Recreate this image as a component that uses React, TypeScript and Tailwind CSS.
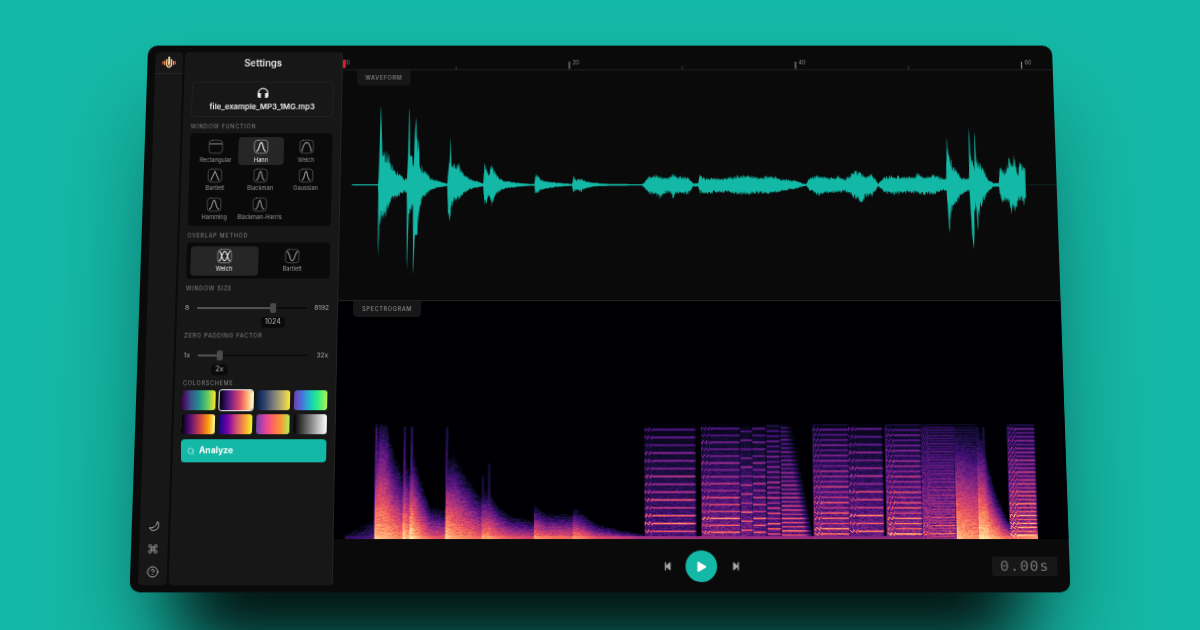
import React, { useLayoutEffect, useRef } from "react";
import { Search, Command, CircleHelp } from "lucide-react";
import { FaPlay, FaStepBackward, FaStepForward } from "react-icons/fa";

function makeRandom(seed: number) {
  let s = seed;
  return () => {
    s = (s * 1664525 + 1013904223) >>> 0;
    return s / 4294967296;
  };
}

function sample(points: number[][], x: number, col: number) {
  for (let i = 1; i < points.length; i++) {
    if (x <= points[i][0]) {
      const a = points[i - 1];
      const b = points[i];
      const t = (x - a[0]) / (b[0] - a[0] || 1);
      return a[col] + (b[col] - a[col]) * Math.max(0, Math.min(1, t));
    }
  }
  return 0;
}

// [time position, peak above the axis, peak below the axis]
const ENVELOPE: number[][] = [
  [352, 0.6, 0.6], [378.3, 0.6, 0.6], [379, 40, 80], [379.8, 85, 45], [380.6, 62, 40], [381.5, 40, 39], [384, 36, 36], [388, 31, 26], [392, 20, 17], [396, 14, 14], [400, 12, 10], [404, 7, 8], [407, 7, 8],
  [407.8, 50, 95], [408.6, 86, 50], [409.4, 36, 34], [412, 30, 24], [413.3, 22, 22], [414.2, 50, 98], [415.3, 70, 50], [416.2, 46, 50], [418, 44, 50], [419.5, 24, 27], [422, 18, 17], [427, 13, 10], [430, 7, 6], [438, 4, 3], [447.2, 1.2, 1.2],
  [448.6, 25, 40], [450, 49, 38], [451, 28, 26], [454, 21, 17], [458, 21, 16], [462, 14, 11], [467, 8, 7], [475, 4.5, 3.5], [483.2, 1.5, 1.5],
  [484.3, 27, 24], [486, 19, 18], [489, 10, 12], [491, 22, 21], [495, 14, 12], [498, 8, 8], [503, 4.5, 4.5], [515, 2.5, 2.5], [530, 0.8, 0.8], [534.3, 0.7, 0.7],
  [535.3, 11, 11], [538, 10, 8], [541, 5, 5.5], [550, 3.3, 3.3], [562, 1.8, 1.8], [572, 0.8, 0.8], [573.2, 10, 10], [576, 5.5, 5.5], [581, 7, 7], [586, 3.5, 3.5], [595, 2.2, 1.8], [608, 0.9, 0.9], [642, 0.6, 0.6],
  [644, 3, 3], [648, 8, 8], [656, 10, 12], [660, 9, 15], [666, 7, 8], [671, 9, 9], [672.5, 15, 14], [675, 9, 9], [688, 8, 10], [693, 1.8, 2], [698, 1.8, 2], [699.5, 10, 9], [705, 7, 9],
  [725, 7, 8], [742, 10, 10], [760, 8, 9], [771, 10, 9], [780, 6, 7], [795, 5, 4.5], [802, 1.6, 2], [806, 0.8, 0.8], [809, 7, 6], [818, 10, 11], [828, 7, 8], [838, 9, 8], [844, 6, 7], [850, 10, 10],
  [855, 15, 14], [861, 13, 19], [866, 9, 12], [871, 12, 12], [875, 6, 6], [878, 1.2, 1.2], [883, 7, 7], [890, 9, 10], [915, 8, 8], [917, 13, 9], [922, 8, 10], [934, 10, 10], [942, 7, 6], [946, 7, 6],
  [947, 49, 32], [948.3, 38, 49], [950, 30, 30], [953, 20, 20], [957, 15, 18], [961, 8, 10], [966, 7, 7], [969, 7, 7], [969.8, 63, 42], [970.8, 36, 54], [972, 30, 64], [973.5, 19, 27], [974.6, 20, 22], [975.4, 58, 30], [976.6, 30, 48], [979, 23, 24], [984, 15, 14], [989, 5, 6], [993, 2, 2],
  [998.5, 2, 2], [1000, 21, 17], [1004, 14, 17], [1007, 19, 17], [1009.5, 27, 28], [1012, 22, 26], [1014, 30, 26], [1018, 12, 17], [1020.5, 28, 16], [1023, 19, 19], [1025.5, 20, 17],
];

const AXIS = 115.6;

function wavePath() {
  const rnd = makeRandom(11);
  const top: string[] = [];
  const bottom: string[] = [];
  const jitter = (amp: number) => (amp > 45 || amp < 1.3 ? 1 : 0.62 + rnd() * 0.46);
  for (let x = 352; x <= 1025.5; x += 0.4) {
    const u = sample(ENVELOPE, x, 1);
    const d = sample(ENVELOPE, x, 2);
    top.push(`${x.toFixed(1)} ${(AXIS - u * jitter(u)).toFixed(2)}`);
    bottom.unshift(`${x.toFixed(1)} ${(AXIS + d * jitter(d)).toFixed(2)}`);
  }
  return `M${top.join("L")}L${bottom.join("L")}Z`;
}
const WAVE = wavePath();

const MAGMA = [
  [0, 0, 4], [20, 14, 54], [59, 15, 112], [100, 26, 128], [140, 41, 129], [183, 55, 121],
  [222, 73, 104], [247, 112, 92], [254, 159, 109], [254, 207, 146], [252, 253, 191],
];

function magma(v: number) {
  const t = Math.max(0, Math.min(0.999, v)) * 10;
  const i = Math.floor(t);
  return MAGMA[i].map((c, k) => c + (MAGMA[i + 1][k] - c) * (t - i));
}

// [time position, cloud height, brightness at the floor]
const CLOUD: number[][] = [
  [350, 0.03, 0.15], [365, 0.1, 0.2], [378.6, 0.15, 0.25], [379, 0.78, 0.88], [384, 0.98, 0.85], [389, 0.95, 0.84], [393, 0.78, 0.82], [398, 0.64, 0.78], [406, 0.5, 0.72],
  [407, 0.66, 0.93], [412, 0.52, 0.8], [414.5, 0.72, 0.95], [419, 0.58, 0.86], [425, 0.42, 0.76], [433, 0.25, 0.66], [447.8, 0.22, 0.6], [448.2, 0.6, 0.93], [456, 0.64, 0.8], [470, 0.46, 0.74],
  [483, 0.32, 0.66], [484, 0.38, 0.78], [491, 0.36, 0.8], [500, 0.25, 0.7], [512, 0.18, 0.62], [534, 0.14, 0.56], [535, 0.26, 0.78], [545, 0.2, 0.72], [572, 0.19, 0.66], [573, 0.24, 0.78], [582, 0.2, 0.72],
  [595, 0.12, 0.6], [620, 0.07, 0.52], [642, 0.04, 0.44], [644, 0.03, 0.45], [946.5, 0.03, 0.35], [947, 0.85, 0.88], [957, 0.85, 0.8], [968.5, 0.82, 0.74], [969, 0.85, 0.94],
  [975.5, 0.8, 0.92], [979, 0.58, 0.86], [986, 0.36, 0.8], [993, 0.22, 0.7], [999, 0.12, 0.66], [1026, 0.12, 0.78],
];

// [start, end, partial spacing, brightness, noise floor, attack strength]
const NOTES: number[][] = [
  [643, 693, 7.75, 0.92, 0.27, 0.5], [698.5, 736.5, 6.85, 0.94, 0.4, 0.55], [736.5, 749, 8.9, 0.9, 0.38, 0], [749, 762, 6.85, 0.9, 0.34, 0], [762, 776, 5.1, 0.84, 0.3, 0],
  [776, 806, 4.1, 0.82, 0.3, 0], [808, 843, 5.17, 0.92, 0.4, 0.6], [843, 876.5, 7.8, 0.96, 0.36, 0.5], [879, 914, 5.15, 0.96, 0.44, 0.6], [914, 947, 2.7, 0.76, 0.5, 0.55], [947, 969, 2.7, 0.5, 0.3, 0], [999, 1026, 3.9, 1.05, 0.48, 0.6],
];

// [time position, brightness, reach]
const STREAKS: number[][] = [
  [379.5, 0.5, 1], [407.5, 0.4, 0.98], [414.5, 0.44, 0.98], [448.8, 0.36, 0.97], [484.5, 0.25, 0.55], [490.5, 0.26, 0.66], [808.5, 0.36, 1], [879.5, 0.45, 1], [920.5, 0.4, 1], [947, 0.36, 0.97], [969.5, 0.36, 0.97], [975.5, 0.36, 0.97], [999.5, 0.4, 1],
];

function cloudLevel(r: number) {
  if (r < 0.3) return 1 - r * 0.8;
  if (r < 0.8) return 0.76 - (r - 0.3) * 0.92;
  return Math.max(0, 0.3 - (r - 0.8) * 0.85);
}

function Spectrogram() {
  const ref = useRef<HTMLCanvasElement>(null);
  useLayoutEffect(() => {
    const canvas = ref.current;
    const ctx = canvas?.getContext("2d");
    if (!canvas || !ctx) return;
    const rnd = makeRandom(5);
    const w = canvas.width;
    const h = canvas.height;
    const img = ctx.createImageData(w, h);
    for (let py = 0; py < h; py++) {
      const level = h - py - 0.5;
      const hh = level / 114;
      let grain = 0.5;
      for (let px = 0; px < w; px++) {
        grain = grain * 0.4 + rnd() * 0.6;
        const u = 600 + (px - 262.5) / 1.0095;
        let v = 0;
        if (hh <= 1 && u > 350 && u < 1026) {
          const ch = sample(CLOUD, u, 1);
          const cb = sample(CLOUD, u, 2);
          v = cb * cloudLevel(hh / ch);
          v += v > 0.02 ? (grain - 0.5) * 0.18 : 0;
          if (level < 3) v = Math.max(v, cb * (0.96 + grain * 0.1));
          if (level < 1.5 && u > 643) v = Math.max(v, 0.45);
          for (const n of NOTES) {
            if (u >= n[0] && u < n[1]) {
              const age = u - n[0];
              const wobble = age < 8 && n[5] > 0 ? Math.sin(age * 1.7 + level * 0.6) * 1.1 : 0;
              const k = (level + wobble) / n[2];
              const nearest = Math.round(k);
              const dist = Math.abs(k - nearest) * n[2];
              const partial = 0.88 + 0.12 * Math.sin(nearest * 2.3 + n[0]);
              const edge = Math.min(1, (n[1] - u) / 3 + 0.4);
              const tail = n[1] === 806 ? Math.max(0, Math.min(1, (32 - age - hh * 20) / 9)) : edge;
              const gain = n[3] * (1 - 0.7 * Math.pow(hh, 0.8)) * partial * tail;
              const width = n[2] < 3 ? 0.9 : 1.35;
              const line = nearest > 0 ? gain * Math.exp(-(dist * dist) / (width * width)) : 0;
              const floor = level > 3 ? n[4] * (1.1 - hh * 0.98) * tail * (0.4 + grain * 0.8) : 0;
              const fade = Math.min(1, Math.max(0.15, (1.02 - hh) * 6));
              const attack = n[5] > 0 && age < 8 && level > 3 ? n[5] * (1.35 - hh) * (1 - age / 11) * (0.2 + grain * 0.8) * fade : 0;
              v = Math.max(v, line * (0.88 + grain * 0.22), floor, attack * (0.5 + 0.5 * Math.exp(-dist)));
            }
          }
          for (const s of STREAKS) {
            const d = Math.abs(u - s[0]);
            if (d < 1.5 && hh < s[2]) v = Math.max(v, s[1] * (1.3 - (0.9 * hh) / s[2]) * (1 - d / 2) * (0.7 + grain * 0.45));
          }
          if (hh > 0.97) v *= 0.55;
        }
        const c = magma(v);
        const o = (py * w + px) * 4;
        img.data[o] = c[0];
        img.data[o + 1] = c[1];
        img.data[o + 2] = c[2];
        img.data[o + 3] = 255;
      }
    }
    ctx.putImageData(img, 0, 0);
  }, []);
  return <canvas ref={ref} width={724} height={238} className="block h-[238px] w-[724px]" />;
}

const CURVES = {
  rect: "M2.500 6.200H17.500",
  hann: "M4.500 16C8 15 7.500 4.500 10 4.500S12 15 15.500 16",
  welch: "M4 16C5.500 8 7.500 4.500 10 4.500S14.500 8 16 16",
  bartlett: "M5 16L10 4.500L15 16",
  narrow: "M5 16C8.500 15 8 4.500 10 4.500S11.500 15 15 16",
};

function WindowIcon({ d }: { d: string }) {
  return (
    <svg viewBox="0 0 20 20" className="size-[16px]" fill="none" stroke="currentColor" strokeLinecap="round">
      <rect x="1.500" y="1.500" width="17" height="17" rx="4" strokeWidth="0.9" opacity="0.6" />
      <path d={d} strokeWidth="1.4" />
    </svg>
  );
}

const WINDOWS = [
  ["Rectangular", CURVES.rect], ["Hann", CURVES.hann], ["Welch", CURVES.welch], ["Bartlett", CURVES.bartlett],
  ["Blackman", CURVES.narrow], ["Gaussian", CURVES.narrow], ["Hamming", CURVES.hann], ["Blackman-Harris", CURVES.narrow],
];

function Label({ children, className }: { children: React.ReactNode; className: string }) {
  return <div className={`text-[5.500px] leading-[8px] tracking-[0.75px] text-[#858585] uppercase whitespace-nowrap ${className}`}>{children}</div>;
}

function SettingSlider({ min, max, value, track, fill, badge }: { min: string; max: string; value: string; track: string; fill: string; badge: string }) {
  return (
    <div className="relative h-[26px] text-[6.500px] leading-[10px] text-[#a8a8a8]">
      <div className="flex h-[10px] items-center justify-between">
        <span>{min}</span>
        <span>{max}</span>
      </div>
      <div className={`absolute top-[4px] h-[2px] w-[110px] rounded bg-[#0a0a0a] ${track}`}>
        <div className={`relative h-full bg-[#525252] ${fill}`}>
          <div className="absolute -top-[4px] -right-[3px] h-[10px] w-[6px] rounded-[2px] bg-[#4a4a4a]" />
        </div>
      </div>
      <div className={`absolute top-[14px] flex h-[11px] -translate-x-1/2 items-center rounded-[3px] bg-[#0a0a0a] px-[4px] text-[7px] text-[#b8b8b8] ${badge}`}>{value}</div>
    </div>
  );
}

const SCHEMES = [
  "bg-[linear-gradient(90deg,#440154,#3b528b_25%,#21918c_50%,#5ec962_75%,#fde725)]",
  "bg-[linear-gradient(90deg,#000004,#3b0f70_20%,#8c2981_40%,#de4968_60%,#fe9f6d_80%,#fcfdbf)]",
  "bg-[linear-gradient(90deg,#00224e,#35456c_25%,#7b7b78_50%,#bcaf6f_75%,#fee838)]",
  "bg-[linear-gradient(90deg,#6e40aa,#4c6edb_22%,#1ac7c2_50%,#30ef82_72%,#aff05b)]",
  "bg-[linear-gradient(90deg,#000004,#420a68_20%,#932667_40%,#dd513a_60%,#fca50a_82%,#fcffa4)]",
  "bg-[linear-gradient(90deg,#0d0887,#7e03a8_28%,#cc4778_50%,#f89540_75%,#f0f921)]",
  "bg-[linear-gradient(90deg,#6e40aa,#e8459c_30%,#ff6a5a_52%,#f59c32_75%,#aff05b)]",
  "bg-[linear-gradient(90deg,#000000,#ffffff)]",
];

function Logo() {
  return (
    <svg viewBox="0 0 42 42" className="size-[14px]" strokeLinecap="round" fill="none">
      <path d="M2.500 18V25M39.500 18V25" stroke="#ee6a4d" strokeWidth="4" />
      <path d="M8 16V27M34 16V27" stroke="#f79a5e" strokeWidth="4" />
      <path d="M14 11V30Q21 40 28 30V11" stroke="#fcc18a" strokeWidth="4.500" />
      <path d="M21 4V27" stroke="#fdfbc8" strokeWidth="5" />
    </svg>
  );
}

function Headphones() {
  return (
    <svg viewBox="0 0 24 24" className="size-[13px]" fill="none" stroke="#f0f0f0" strokeWidth="2.200">
      <path d="M3 18V13A9 9 0 0 1 21 13V18" />
      <path d="M3 14H7V21H5Q3 21 3 18ZM21 14H17V21H19Q21 21 21 18Z" fill="#f0f0f0" />
    </svg>
  );
}

function MoonIcon() {
  return (
    <svg viewBox="0 0 24 24" className="size-[12px]" fill="none" stroke="currentColor" strokeWidth="1.800" strokeLinejoin="round">
      <path d="M18.500 3C23 10 21 19 13 20.500C8 21.500 4 19 3 15C6 16.500 10 15.500 13 13C16 10.500 18 7 18.500 3Z" />
    </svg>
  );
}

function Sidebar() {
  return (
    <nav className="flex w-[27.500px] flex-col items-center rounded-[4px] bg-[#171717] text-[#b8b8b8]">
      <div className="flex h-[23px] w-full items-center justify-center border-b border-[#262626]"><Logo /></div>
      <div className="mt-auto mb-[7px] flex flex-col items-center gap-[11px]">
        <MoonIcon />
        <Command className="size-[11px]" strokeWidth={1.7} />
        <CircleHelp className="size-[12px]" strokeWidth={1.7} />
      </div>
    </nav>
  );
}

function Settings() {
  return (
    <section className="ml-[2.500px] flex w-[161px] flex-col rounded-[4px] border-r border-[#242424] bg-[#171717] px-[8px]">
      <h1 className="mt-[5px] text-center text-[9.700px] leading-[13px] font-semibold text-[#e6e6e6]">Settings</h1>
      <div className="mt-[13px] flex h-[37px] flex-col items-center rounded-[3px] border border-[#202020] pt-[3.500px]">
        <Headphones />
        <div className="mt-[3.500px] text-[7.800px] leading-[10px] font-semibold whitespace-nowrap text-[#ededed]">file_example_MP3_1MG.mp3</div>
      </div>
      <Label className="mt-[6px]">Window function</Label>
      <div className="mt-[3px] grid h-[96px] auto-rows-[29.800px] grid-cols-3 rounded-[4px] bg-[#0a0a0a] px-[3.500px] pt-[3.500px]">
        {WINDOWS.map(([name, d]) => (
          <div key={name} className={`flex flex-col items-center rounded-[4px] pt-[2.500px] ${name === "Hann" ? "bg-[#262626] text-[#f0f0f0]" : "text-[#969696]"}`}>
            <WindowIcon d={d} />
            <span className="mt-[0.500px] text-[5.700px] leading-[9px] whitespace-nowrap">{name}</span>
          </div>
        ))}
      </div>
      <Label className="mt-[6px]">Overlap method</Label>
      <div className="mt-[3px] flex h-[37px] rounded-[4px] bg-[#0a0a0a] p-[3.500px]">
        <div className="flex flex-1 flex-col items-center rounded-[4px] bg-[#262626] pt-[2.500px] text-[#f0f0f0]">
          <WindowIcon d="M3.500 4C6 4 6.500 16 10 16S14 4 16.500 4M3.500 16C6 16 6.500 4 10 4S14 16 16.500 16" />
          <span className="mt-[0.500px] text-[5.700px] leading-[8px]">Welch</span>
        </div>
        <div className="flex flex-1 flex-col items-center pt-[2.500px] text-[#969696]">
          <WindowIcon d="M3.500 4C7 6 7 16 10 16S13 6 16.500 4" />
          <span className="mt-[0.500px] text-[5.700px] leading-[8px]">Bartlett</span>
        </div>
      </div>
      <Label className="mt-[6px]">Window size</Label>
      <div className="mt-[10.500px]"><SettingSlider min="8" max="8192" value="1024" track="left-[12px]" fill="w-[76px]" badge="left-[88px]" /></div>
      <Label className="mt-[3.500px]">Zero padding factor</Label>
      <div className="mt-[10.500px]"><SettingSlider min="1x" max="32x" value="2x" track="left-[14px]" fill="w-[22px]" badge="left-[36px]" /></div>
      <Label className="mt-[3.500px]">Colorscheme</Label>
      <div className="mt-[3px] grid grid-cols-4 gap-x-[4px] gap-y-[4px]">
        {SCHEMES.map((scheme, i) => (
          <div key={scheme} className={`h-[20px] rounded-[3px] ${scheme} ${i === 1 ? "ring-1 ring-[#f5f5f5]" : ""}`} />
        ))}
      </div>
      <button className="mt-[5px] flex h-[23px] items-center gap-[4px] rounded-[4px] bg-[#14b8a6] px-[6px] text-[8.500px] font-bold text-white">
        <Search className="size-[8px] opacity-80" strokeWidth={2} />
        Analyze
      </button>
    </section>
  );
}

function Ruler() {
  return (
    <svg viewBox="0 0 723 25" preserveAspectRatio="none" className="block h-[26px] w-full border-b border-[#1d1d1d] font-['Inter',sans-serif]">
      <rect x="0" y="14.800" width="3.200" height="9" rx="1" fill="#c92228" />
      {[0, 1, 2, 3].map((i) => (
        <g key={i}>
          {i > 0 && <rect x={i * 230.3} y="17" width="1" height="7.500" fill="#a3a3a3" />}
          {i < 3 && <rect x={i * 230.3 + 115} y="21.500" width="1" height="3.500" fill="#3a3a3a" />}
          <text x={i * 230.3 + 3.600} y="20.300" fontSize="5.500" fill="#8a8a8a">{i * 20}</text>
        </g>
      ))}
    </svg>
  );
}

function Tab({ children, width }: { children: string; width: string }) {
  return (
    <div className={`absolute top-0 left-[15px] flex h-[15.500px] items-center justify-center rounded-b-[4px] bg-[#171717] text-[5.500px] font-medium tracking-[0.7px] text-[#8a8a8a] uppercase ${width}`}>
      {children}
    </div>
  );
}

export default function App() {
  return (
    <main className="h-[630px] w-[1200px] overflow-hidden bg-[#14b8a6] pt-[35.500px] font-['Inter',sans-serif]">
      <div className="mx-auto flex h-[555px] w-[922px] [transform:perspective(2400px)_rotateX(10deg)] rounded-[10px] bg-[#0a0a0a] shadow-[0_105px_65px_-55px_rgba(0,0,0,0.86),0_60px_100px_-5px_rgba(0,0,0,0.32)]">
        <div className="flex py-[7px] pl-[8px]">
          <Sidebar />
          <Settings />
        </div>
        <div className="flex min-w-0 flex-1 flex-col">
          <Ruler />
          <div className="relative h-[239px] border-b border-[#262626]">
            <Tab width="w-[54px]">Waveform</Tab>
            <svg viewBox="340.500 0 715.700 230" preserveAspectRatio="none" className="block h-full w-full">
              <path d="M1025 115.600H1056.200" stroke="#14b8a6" strokeWidth="0.6" opacity="0.25" />
              <path d={WAVE} fill="#14b8a6" />
            </svg>
          </div>
          <div className="relative h-[239px] overflow-hidden">
            <Spectrogram />
            <Tab width="w-[68px]">Spectrogram</Tab>
          </div>
          <footer className="grid flex-1 grid-cols-3 items-center text-[#a8a8a8]">
            <div />
            <div className="flex items-center justify-center gap-[13.500px]">
              <FaStepBackward className="size-[9px]" />
              <div className="flex size-[31px] items-center justify-center rounded-full bg-[#14b8a6] text-white"><FaPlay className="ml-[1px] size-[10px]" /></div>
              <FaStepForward className="size-[9px]" />
            </div>
            <div className="mr-[12px] flex h-[19px] w-[64px] items-center justify-center justify-self-end rounded-[3px] bg-[#171717] font-['DejaVu_Sans_Mono',monospace] text-[14.500px] tracking-[1px] text-[#737373]">0.00s</div>
          </footer>
        </div>
      </div>
    </main>
  );
}
